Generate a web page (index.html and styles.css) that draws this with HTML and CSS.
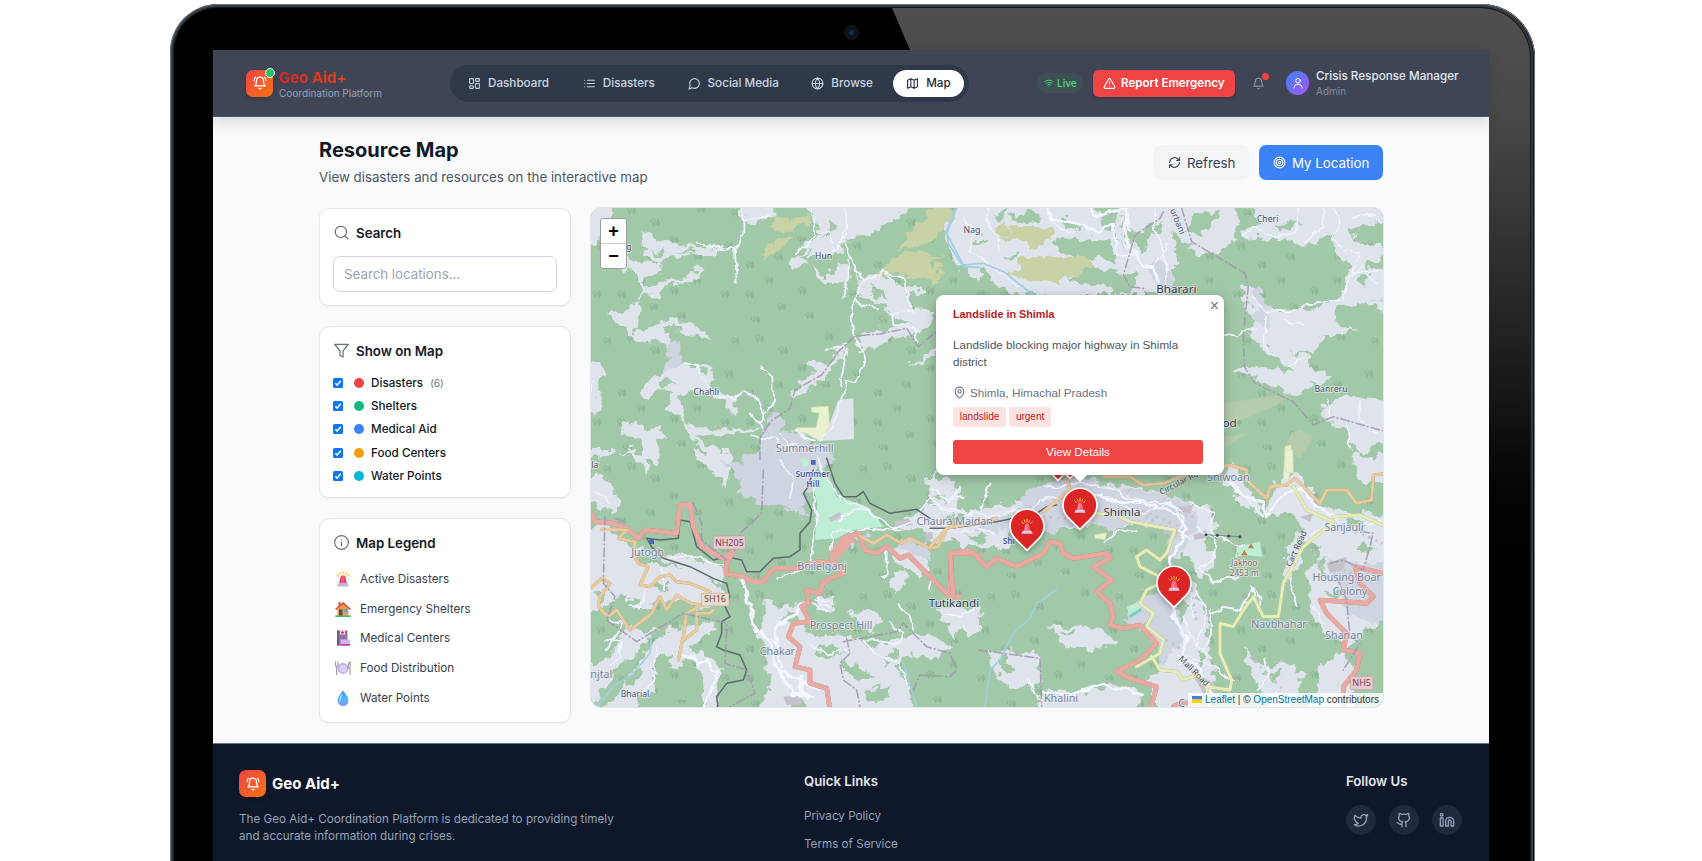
FILE: index.html
```html
<!DOCTYPE html>
<html lang="en">
<head>
<meta charset="utf-8">
<title>Geo Aid+ Resource Map</title>
<link rel="stylesheet" href="styles.css">
</head>
<body>
<svg class="defs" width="0" height="0" aria-hidden="true">
  <defs>
    <linearGradient id="siren" x1="0" x2="1"><stop offset="0" stop-color="#e8264f"/><stop offset=".5" stop-color="#ff6a7c"/><stop offset="1" stop-color="#e0244f"/></linearGradient>
    <linearGradient id="water" x1="0" y1="0" x2="0" y2="1"><stop offset="0" stop-color="#3a9be8"/><stop offset=".6" stop-color="#55b5fa"/><stop offset="1" stop-color="#8f8df5"/></linearGradient>
    <symbol id="i-siren" viewBox="0 0 16 16"><g stroke="#f9c23c" stroke-width="1.2" stroke-linecap="round"><path d="M8 .8V3M4.4 1.4l1 2M11.600 1.400l-1 2M2 3.600l1.600 1.400M14 3.600l-1.600 1.400"/></g><path d="M4.200 13 5.400 6q.4-1.800 2.600-1.800T10.600 6l1.200 7z" fill="url(#siren)"/><path d="M3.300 12h9.400l1.300 3.400H2z" fill="#c4b5e0"/></symbol>
    <symbol id="i-house" viewBox="0 0 16 16"><path d="M2.500 8 8 3l5.500 5v6.500h-11z" fill="#e0a05c"/><path d="M3.500 1h2v4h-2z" fill="#a56953"/><path d="M0 8 8 .8 16 8l-1.300 1L8 3.500 1.300 9z" fill="#e85535"/><path d="M4 8.500h3.500V15H4z" fill="#70443a"/><path d="M9.500 8h3v3h-3z" fill="#3ba9e8"/><path d="M.3 14.300h15.400V16H.3z" fill="#45b36b"/></symbol>
    <symbol id="i-hospital" viewBox="0 0 16 16"><path d="M2 .5h10.500v15H2z" fill="#8d779f"/><path d="M2 .5h2v15H2z" fill="#6e5a80"/><path d="M5 .5h5v4H5z" fill="#f5dff2"/><path d="m7.500 1 1.800 1.500-1.800 1.700-1.800-1.700z" fill="#e3227e"/><path d="M5.500 9.500H15v6H5.500z" fill="#d9b3f0"/><path d="M5.500 14H15v1.600H5.500z" fill="#c73bb8"/></symbol>
    <symbol id="i-plate" viewBox="0 0 16 16"><circle cx="8" cy="8.400" r="5.600" fill="#c5b4e8"/><circle cx="8" cy="8.400" r="3.600" fill="#dccff7"/><path d="M.5 1.500v4q0 1 1.200 1V15M3 1.500v4q0 1-1.300 1M15 15V2q-2 1.500-2 6h2" fill="none" stroke="#9d93aa" stroke-width="1.100"/></symbol>
    <symbol id="i-drop" viewBox="0 0 16 16"><path d="M8 0c1.300 3 5.500 6.400 5.500 10.500a5.500 5.500 0 0 1-11 0C2.500 6.400 6.700 3 8 0z" fill="url(#water)"/><path d="M7 5Q4.500 8 5 11" fill="none" stroke="#b8e4ff" stroke-width="1.200" stroke-linecap="round"/></symbol>
    <symbol id="i-bellring" viewBox="0 0 24 24"><path d="M10.300 21a1.940 1.940 0 0 0 3.400 0M4 2C2.800 3.700 2 5.700 2 8M22 8c0-2.300-.8-4.300-2-6M6 8a6 6 0 0 1 12 0c0 7 3 9 3 9H3s3-2 3-9"/></symbol>
    <symbol id="pin" viewBox="-60 -60 120 145"><path d="M0 73-36 37A51 51 0 1 1 36 37Z" fill="#dc2626" stroke="#fff" stroke-width="5"/>
      <g fill="none" stroke="#fbbf3f" stroke-width="3" stroke-linecap="round"><path d="M0-20v8M-8-18l2 7M8-18l-2 7M-15-12l4 5M15-12l-4 5"/></g>
      <path d="M-10 16-6-4Q-5-8 0-8T6-4l4 20z" fill="#ff6478"/><path d="M-5 12-3-4H1L0 12z" fill="#ff95a2"/><path d="M-13 14h26l4 9h-34z" fill="#d6cbea"/></symbol>
  </defs>
</svg>
<div class="laptop"><div class="bezel">
  <div class="gloss"></div>
  <div class="camera"></div>
  <div class="screen">
    <header class="topbar">
      <div class="brand">
        <div class="logo"><svg class="ico"><use href="#i-bellring"/></svg><span class="online"></span></div>
        <div class="brand-text"><span class="brand-name">Geo Aid+</span><span class="brand-sub">Coordination Platform</span></div>
      </div>
      <nav class="nav">
        <a class="n1"><svg class="ico" viewBox="0 0 24 24"><rect x="3" y="3" width="7" height="9" rx="1"/><rect x="14" y="3" width="7" height="5" rx="1"/><rect x="14" y="12" width="7" height="9" rx="1"/><rect x="3" y="16" width="7" height="5" rx="1"/></svg><span>Dashboard</span></a>
        <a class="n2"><svg class="ico" viewBox="0 0 24 24"><path d="M8 6h13M8 12h13M8 18h13M3 6h.01M3 12h.01M3 18h.01"/></svg><span>Disasters</span></a>
        <a class="n3"><svg class="ico" viewBox="0 0 24 24"><path d="M7.900 20A9 9 0 1 0 4 16.100L2 22Z"/></svg><span>Social Media</span></a>
        <a class="n4"><svg class="ico" viewBox="0 0 24 24"><circle cx="12" cy="12" r="10"/><path d="M12 2a14.500 14.500 0 0 0 0 20 14.500 14.500 0 0 0 0-20M2 12h20"/></svg><span>Browse</span></a>
        <a class="n5 active"><svg class="ico" viewBox="0 0 24 24"><path d="m3 6 6-3 6 3 6-3v15l-6 3-6-3-6 3zM9 3v15M15 6v15"/></svg><span>Map</span></a>
      </nav>
      <div class="tools">
        <span class="live"><svg class="ico" viewBox="0 0 24 24"><path d="M12 20h.01M2 8.820a15 15 0 0 1 20 0M5 12.860a10 10 0 0 1 14 0M8.500 16.430a5 5 0 0 1 7 0"/></svg>Live</span>
        <span class="report"><svg class="ico" viewBox="0 0 24 24"><path d="m21.730 18-8-14a2 2 0 0 0-3.480 0l-8 14A2 2 0 0 0 4 21h16a2 2 0 0 0 1.730-3M12 9v4M12 17h.01"/></svg><span>Report Emergency</span></span>
        <span class="bell"><svg class="ico" viewBox="0 0 24 24"><path d="M10.300 21a1.940 1.940 0 0 0 3.400 0M6 8a6 6 0 0 1 12 0c0 7 3 9 3 9H3s3-2 3-9"/></svg><i></i></span>
        <span class="avatar"><svg class="ico" viewBox="0 0 24 24"><circle cx="12" cy="7.500" r="4.500"/><path d="M4 22v-1a8 6.500 0 0 1 16 0v1"/></svg></span>
        <div class="user"><b>Crisis Response Manager</b><span>Admin</span></div>
      </div>
    </header>
    <main class="page">
      <div class="heading">
        <div><h1>Resource Map</h1><p>View disasters and resources on the interactive map</p></div>
        <div class="actions">
          <span class="btn refresh"><svg class="ico" viewBox="0 0 24 24"><path d="M3 12a9 9 0 0 1 9-9 9.750 9.750 0 0 1 6.740 2.740L21 8M21 3v5h-5M21 12a9 9 0 0 1-9 9 9.750 9.750 0 0 1-6.740-2.740L3 16M8 16H3v5"/></svg><span>Refresh</span></span>
          <span class="btn locate"><svg class="ico" viewBox="0 0 24 24"><circle cx="12" cy="12" r="10"/><circle cx="12" cy="12" r="6"/><circle cx="12" cy="12" r="2"/></svg><span>My Location</span></span>
        </div>
      </div>
      <div class="columns">
        <aside class="side">
          <section class="card search">
            <h2><svg class="ico" viewBox="0 0 24 24"><circle cx="11" cy="11" r="9"/><path d="m22 22-4.600-4.600"/></svg>Search</h2>
            <div class="field">Search locations...</div>
          </section>
          <section class="card filters">
            <h2><svg class="ico" viewBox="0 0 24 24"><path d="M23 2H1l8.500 10.500V20l5 2.500v-10z"/></svg>Show on Map</h2>
            <ul>
              <li><svg class="check" viewBox="0 0 10 10"><rect width="10" height="10" rx="1.500"/><path d="m2.300 5.200 1.800 1.900 3.700-4.400"/></svg><i class="dot red"></i>Disasters<small>(6)</small></li>
              <li><svg class="check" viewBox="0 0 10 10"><rect width="10" height="10" rx="1.500"/><path d="m2.300 5.200 1.800 1.900 3.700-4.400"/></svg><i class="dot green"></i>Shelters</li>
              <li><svg class="check" viewBox="0 0 10 10"><rect width="10" height="10" rx="1.500"/><path d="m2.300 5.200 1.800 1.900 3.700-4.400"/></svg><i class="dot blue"></i>Medical Aid</li>
              <li><svg class="check" viewBox="0 0 10 10"><rect width="10" height="10" rx="1.500"/><path d="m2.300 5.200 1.800 1.900 3.700-4.400"/></svg><i class="dot amber"></i>Food Centers</li>
              <li><svg class="check" viewBox="0 0 10 10"><rect width="10" height="10" rx="1.500"/><path d="m2.300 5.200 1.800 1.900 3.700-4.400"/></svg><i class="dot cyan"></i>Water Points</li>
            </ul>
          </section>
          <section class="card legend">
            <h2><svg class="ico" viewBox="0 0 24 24"><circle cx="12" cy="12" r="11"/><path d="M12 17v-5.500M12 7.500h.01"/></svg>Map Legend</h2>
            <ul>
              <li><svg><use href="#i-siren"/></svg>Active Disasters</li>
              <li><svg><use href="#i-house"/></svg>Emergency Shelters</li>
              <li><svg><use href="#i-hospital"/></svg>Medical Centers</li>
              <li><svg><use href="#i-plate"/></svg>Food Distribution</li>
              <li><svg><use href="#i-drop"/></svg>Water Points</li>
            </ul>
          </section>
        </aside>
        <div class="map">
          <svg class="tiles" viewBox="591 208 792 499" width="792" height="499">
            <defs>
              <filter id="ragged" x="-5%" y="-5%" width="110%" height="110%">
                <feTurbulence type="fractalNoise" baseFrequency=".028" numOctaves="3" seed="8" result="n"/>
                <feDisplacementMap in="SourceGraphic" in2="n" scale="52" xChannelSelector="R" yChannelSelector="G"/>
              </filter>
              <filter id="winding" x="-5%" y="-5%" width="110%" height="110%">
                <feTurbulence type="fractalNoise" baseFrequency=".03" numOctaves="2" seed="3" result="n"/>
                <feDisplacementMap in="SourceGraphic" in2="n" scale="24" xChannelSelector="R" yChannelSelector="G"/>
              </filter>
              <symbol id="tree" viewBox="0 0 26 28" overflow="visible"><path d="M7 25V10M7 18C1 18-1 12 2 8S11 2 12 8 12 18 7 18M19 25V11M19 5l-5 14h10z"/></symbol>
              <pattern id="woods" width="384" height="384" patternUnits="userSpaceOnUse">
                <rect width="384" height="384" fill="#a1c9a8"/>
                <g fill="none" stroke="#88b18f" stroke-width="2.300">
                  <use href="#tree" x="68" y="24" width="28" height="30"/><use href="#tree" x="142" y="18" width="28" height="30"/>
                  <use href="#tree" x="350" y="12" width="28" height="30"/><use href="#tree" x="50" y="122" width="28" height="30"/>
                  <use href="#tree" x="200" y="156" width="28" height="30"/><use href="#tree" x="270" y="104" width="28" height="30"/>
                  <use href="#tree" x="340" y="154" width="28" height="30"/><use href="#tree" x="112" y="180" width="28" height="30"/>
                  <use href="#tree" x="170" y="226" width="28" height="30"/><use href="#tree" x="38" y="266" width="28" height="30"/>
                  <use href="#tree" x="112" y="268" width="28" height="30"/><use href="#tree" x="270" y="258" width="28" height="30"/>
                  <use href="#tree" x="338" y="226" width="28" height="30"/><use href="#tree" x="208" y="306" width="28" height="30"/>
                  <use href="#tree" x="292" y="332" width="28" height="30"/><use href="#tree" x="130" y="344" width="28" height="30"/>
                  <use href="#tree" x="214" y="52" width="28" height="30"/>
                </g>
              </pattern>
            </defs>
            <rect class="woods" transform="translate(580 200) scale(.33333)" width="2450" height="1560"/>
            <!-- north-west -->
            <g transform="translate(580 200) scale(.33333)">
              <g class="ground">
              <path class="land" d="M0 0H90V110L50 125 0 130ZM140 160 165 190 240 185 245 230 200 225 195 262 250 245 300 235 345 205 365 215 350 240 290 250 240 265 235 292 195 285 180 330 155 402 80 350 140 330 182 310 185 265 170 230 125 200ZM178 120 210 95 240 120 300 135 440 142 400 165 330 165 230 185 180 165 200 145ZM185 383 250 365 290 345 310 375 350 380 400 418 320 405 280 395 270 430 185 425 150 400ZM192 545 240 520 310 490 400 500 405 530 375 560 460 590 470 640 450 655 440 600 400 590 330 570 290 615 325 682 540 685 480 700 350 705 445 780H400L262 620 280 590 250 565 215 585 192 575ZM0 490 65 485 70 520 50 560 62 635 0 640ZM115 700 150 665 210 680 240 675 252 710 232 780H190L200 720 160 710ZM485 0H580V60L560 62 500 70 490 50ZM680 0H985V25L900 85 850 110 800 115 770 170 690 170 640 210 625 185 670 150 720 100ZM695 195 730 225 790 190 812 225 792 250 740 248 705 225ZM830 210 860 240 920 225 960 260 1030 262 1035 275 980 280 1000 335 1060 325 1050 370 1010 400 900 430 830 445 850 400 920 385 990 372 930 345 890 300 840 290 850 250ZM640 572 725 500 800 430 808 450 750 500 720 540 660 590 635 602ZM680 490 705 475 740 495 752 512 705 515ZM980 505 1050 450 1068 440V460L1020 485ZM1130 0H1200V250L1140 205 1095 110Z"/>
              <path class="town" d="M265 425H300L310 480 290 505 235 522 270 490ZM575 640 600 645 612 682 650 700 740 730 760 800H430L540 760 545 700 570 680Z"/>
              <path class="farm" d="M575 55 690 40 695 70 640 95 580 97ZM540 150 620 115 640 125 550 168ZM1040 30 1120 25 1100 90 1060 112 980 150H955L985 95 1030 60ZM900 205 950 165 1085 163 1050 187 1052 208 1087 225 1080 245 1020 230 940 220 890 225Z"/>
              <path class="woods2" d="M215 150 250 140 255 158 220 162ZM300 155 340 150 330 162ZM250 385 300 375 310 395 260 400ZM240 545 270 535 280 550 245 560ZM360 510 390 515 375 535ZM720 120 760 60 770 90ZM860 260 900 270 930 310 890 290ZM900 355 950 350 960 365 910 370ZM655 165 690 150 680 185Z"/>
              </g>
              <path class="land" d="M775 600 820 595 822 718 730 722Z"/>
              <path class="pale" d="M695 622 745 618 748 680 720 725 680 700 648 695 650 683H708L718 640 695 635Z"/>
              <g class="track"><path d="M490 0V100L465 150 470 250M465 140 430 148 350 130M490 60 530 48 575 45M795 0 800 80 785 110 830 210 850 240 820 300 815 350 820 410 850 460 855 505 830 540 800 545 790 600 750 690 722 722M680 0 705 60V110L650 160M745 95 760 160 800 100M720 100 745 95M805 180 805 240 790 290M850 240 890 230 910 215 940 250M915 220 975 235 985 300 1000 335 935 340 940 375 1000 380 1015 430M825 300 860 320 895 325M795 430 740 450M800 445 780 560M540 500 580 530 582 600 550 650 540 665M310 485 350 495 370 540 400 575 460 600 490 575 530 590 555 660M40 545 30 580M640 690 700 720M600 700 640 760M510 712 580 715 600 740 650 730M515 640 545 680"/></g>
              <path class="stream" d="M1140 0 1100 90 1105 130 1150 200 1200 202"/>
              <path class="border" d="M540 780V715L570 665 630 625 645 570 725 525 775 455 825 408 900 402 980 385 1015 440 1068 395"/>
            </g>
            <!-- south-west -->
            <g transform="translate(580 450) scale(.33333)">
              <g class="ground">
              <path class="land" d="M0 90 60 70 90 100 115 150 110 185 0 150ZM0 0H110L90 20 0 30ZM100 0 210 5 190 75 170 20ZM330 0H450L440 120 380 50ZM0 235 80 225 120 270 160 290 260 320 290 310 430 355 430 395 350 375 300 345 250 330 200 310 160 320 190 345H300L380 380 440 430 430 470 350 470 320 450 240 460 180 470 130 440 80 470 0 500ZM0 640H60L80 600 130 550 140 520 190 545 240 535 150 620 90 680 45 770H0ZM240 560 300 530 420 520 370 560 330 600 390 615 420 660 400 800H370L380 700 350 640 310 610 300 660 265 655 280 610 230 620 220 690 240 740 180 730 160 800H60L200 600ZM555 450 600 470 680 460 665 520 680 545 810 560 900 590 1000 550 1080 560 1110 590 1060 640 1000 610 940 650 980 700 1000 800H700L640 730 630 800H540L575 690 560 620 540 590ZM930 370 975 360 985 395 950 435 930 410ZM810 490 900 485 920 515 860 540ZM920 290 980 280 1050 330 1020 390 970 340ZM1080 470 1200 480V530L1160 560 1150 500 1100 510ZM1040 90 1130 90 1140 180 1080 210 1200 230V250L1060 280 1030 230 930 230 1000 200 1060 160ZM720 440 770 450 750 480 710 470Z"/>
              <path class="town" d="M420 30 520 50 560 0H720L700 130 660 160 675 200 610 170 560 160 510 150 470 130 490 100ZM940 280 1040 270 1060 320 1020 330ZM800 260 850 250 860 270 810 290Z"/>
              <path class="woods2" d="M700 600 760 590 790 610 740 625ZM780 640 850 650 880 690 830 700ZM900 620 950 605 960 630 910 645ZM60 600 100 590 90 620 60 640ZM130 690 190 650 180 690 140 710ZM260 710 330 690 350 740 280 760ZM620 480 650 490 640 520 610 510ZM840 720 930 710 920 750 860 750ZM40 430 80 430 60 460ZM220 400 280 395 260 420 230 425ZM1060 140 1090 130 1080 160Z"/>
              </g>
              <path class="mint" d="M712 70 740 75 770 140 850 165 890 200 910 230 820 240 770 265 705 270 712 160 700 110Z"/>
              <path class="mint" d="M660 30 675 22 690 40 672 55Z"/>
              <path class="bld" d="M745 205 780 185 785 200 755 215ZM610 740 660 735 665 765 620 765ZM1035 250 1055 245 1060 265 1040 275ZM940 215 985 205 1000 225 950 230Z"/>
              <g class="track"><path d="M712 20 740 90 790 150 850 170 900 210 940 235 1030 210 1060 240 1110 245M705 60 700 160 712 220 700 270 690 350M755 300 760 250 820 240 860 235 960 245M770 210 840 175 870 190M1000 210 1050 140 1080 170 1150 190M920 290V370L905 382M710 450 750 475M715 440 760 465M700 460 740 480M590 380 640 370 700 345M850 570 900 620 960 640 980 700M850 570 960 580 970 555 930 520M955 465 990 500 1000 540M1090 490 1120 480 1150 500 1160 540M250 320 330 315 440 355M200 400 180 470 150 465M90 510 130 520 80 600M75 570 125 575 120 620 90 650M230 590 215 700 170 740M690 590 740 610 800 600M240 360 250 420M600 30 640 90 630 145M1050 420 1060 380 1020 350M1060 90 1070 60M1140 110 1100 160M50 120 90 160"/></g>
              <g class="road"><path d="M485 390 500 430 510 480 530 540 570 580 585 650 620 690 650 740 700 745M600 650 595 600 590 530 640 495 665 460M590 590 580 570M310 620 340 620 350 645 380 630 390 660 415 665 395 720 370 780M660 680 670 740M600 660 720 720"/><path class="plaza" d="M640 735 665 725 690 745M662 685 668 735"/></g>
              <g class="rail"><path d="M740 25 765 100 790 140 830 140 850 125 870 160 930 190 1010 178 1050 205M700 60 685 110 670 130 695 180 690 215 660 250 660 300 630 320 580 325 540 365 500 365 485 330 440 320 400 330 350 290 330 215 300 210 295 265 240 270 200 265 215 290 250 325 330 350 400 385 440 400 450 440 435 470 450 500 425 515 425 550 410 590 430 600 480 615 500 660 490 690 440 700 410 740 415 780"/></g>
              <g class="primary"><path d="M20 165 45 215 100 220 140 235 175 265 195 240 290 250 300 165 330 163 340 230 365 290 430 325 460 305 440 340 438 372 490 378 515 395 550 395 580 355 650 355 710 335 770 340 790 370 730 395 720 430 680 420 685 460 665 470 690 515 640 520 625 560 660 590 645 650 690 660 690 700 740 715 750 780M755 325 790 265 835 250 855 300 890 310 920 290 960 325 985 315 1030 360 1090 420 1110 440 1140 440M1110 440 1115 310 1160 300 1200 320M690 515 700 525M770 310 800 270 820 270"/></g>
              <g class="wide"><path d="M766 312 798 275"/></g>
              <g class="secondary"><path d="M65 238 140 240 115 265 165 275 160 310 175 340 205 350 180 405 210 410 240 380 270 375 290 395 330 400 390 425M20 425 65 385 90 400 60 440 55 470 85 500 110 480 150 540 190 510 215 490 240 440 260 480 290 435 330 460 365 465 320 490 310 560 295 630M400 480 390 490 350 490 350 540 305 575M840 258 880 280 920 255 965 280 990 265 1050 295 1075 290 1100 240"/></g>
              <path class="stream" d="M215 550 210 610 160 670 100 710 50 770M970 640 990 700 1010 770"/>
              <path class="border" d="M550 60 545 190 480 250 460 310M340 160 365 220 365 270 440 330M75 200 70 400 105 440 80 510 170 575 310 490 440 520 435 640 500 660 525 730 450 770M105 205 135 215M800 565 810 610 780 640 790 690 830 720 840 770M790 575 950 545 970 520 1040 590 1110 610 1130 660 1110 680 1020 675 1000 720"/>
            </g>
            <!-- north-east -->
            <g transform="translate(930 200) scale(.33333)">
              <g class="ground">
              <path class="land" d="M95 0H480L520 70 560 110 600 160 640 190 680 230 700 285H250L150 200 80 130 60 90ZM560 0H900L930 60 910 120 860 160 800 160 760 120 720 90 740 170 720 280H640L620 200 560 100ZM960 0H1390V65L1250 80 1290 130 1357 140V170L1300 200 1390 210V340L1230 320 1220 370 1290 390 1200 400 1150 450 1090 460 1010 440 960 400 975 350 950 300 930 290 940 255 970 270 1020 330 1130 330 1220 290 1270 200 1220 160 1210 100 1130 140 1060 110 960 115 930 100 990 70ZM950 400 1000 410 1080 460 1150 470 1130 500 1060 490ZM915 515 950 500 1060 510 1120 530 1145 545 1110 580 1080 585 1030 560 960 530ZM1060 480 1200 520 1170 550 1080 520ZM1170 620 1240 580 1280 590 1390 600V720L1290 760 1250 700 1180 660ZM1250 760 1390 770V840H1280Z"/>
              <path class="woods2" d="M130 115 170 120 170 132 135 130ZM230 50 290 35 340 50 320 70 260 65ZM400 60 460 80 440 100 400 90ZM210 160 280 155 250 180ZM1215 330 1250 310 1320 310 1357 330V375L1300 380 1220 365ZM1040 80 1110 60 1100 85 1050 95ZM380 110 540 120 560 190 470 170 380 150ZM480 190 620 230 600 285 420 240ZM180 45 230 30 200 70ZM570 50 620 110 700 60 670 110 640 150 590 130ZM720 240 745 170 760 285ZM790 40 880 30 820 100 770 90ZM1290 90 1357 80V110L1300 120ZM1280 230 1330 220 1300 260Z"/>
              <path class="farm" d="M0 190 38 195 20 225 35 245 0 245ZM255 80 350 85 370 110 330 150 270 120 210 115ZM270 175 470 165 480 200 380 250 360 235 260 240 240 235ZM190 85 230 65 240 90 210 110Z"/>
              <path class="town" d="M655 190 680 175 720 200 730 250 700 275 670 240ZM960 270 985 265 1020 330 1010 390 975 370 980 310ZM1330 300 1390 280V320Z"/>
              </g>
              <path class="field-p" d="M880 610 1085 580 1040 615 960 650 900 670 880 650ZM880 710 950 700 880 750ZM1085 700 1110 688 1150 710 1110 775 1060 750Z"/>
              <path class="pale" d="M1065 740 1082 735 1090 780 1075 840H1060Z"/>
              <g class="track"><path d="M105 60 130 100 120 150 200 210 270 260M175 0 170 70 210 120 205 150M350 0 360 60 390 90 430 100M680 0 670 70 690 130 710 210 715 250M700 285 670 200 720 130M880 400 920 408 950 390 980 390M970 290 1000 330 1080 335 1130 310 1240 300 1260 230 1300 200M935 105 970 80 1040 110 1100 95 1110 0M1120 130 1180 80 1180 0M1200 0 1230 60 1210 110 1240 150 1290 160 1260 220 1350 210M1010 340 1000 440 1030 470M1310 225 1340 250M1060 360 1120 375M1340 40 1260 50M1190 600 1200 650M1290 600 1290 660 1340 700M1250 660 1260 740M1120 470 1080 500"/></g>
              <g class="road"><path d="M350 0 365 60 420 65 510 95 550 75 560 165 620 165 635 195 670 200 680 245M475 0 495 45 530 35 590 30 585 120 620 160M590 30 600 90"/></g>
              <path class="stream" d="M90 0 50 100 100 195 160 190 220 215 310 285"/>
              <path class="border" d="M700 35 690 55 615 105 580 225 600 260 640 265 650 285M755 25 785 125 945 220 955 260 940 400 943 500 975 550 1090 605 1150 675 1210 650 1357 692"/>
            </g>
            <!-- south-east -->
            <g transform="translate(930 450) scale(.33333)">
              <g class="ground">
              <path class="land" d="M120 190 200 160 300 150 400 100 480 90 620 120 760 150 840 170 860 230 830 290 860 330 820 380 780 330 740 320 720 240 600 230 540 240 500 220 400 240 330 230 200 300 100 290 60 250ZM35 470 130 480 160 500 100 520 80 570 30 510ZM170 600 320 610 340 690 250 720 180 640ZM350 530 500 530 560 570 520 600 400 590ZM320 760 350 715 440 735 530 705 600 700 640 740 580 800H330ZM900 30 1000 190 1040 100 1110 70 1170 170 1220 180 1390 200V480L1290 560 1250 600 1180 540 1140 470 1130 380 1170 280 1100 260 1120 330 1080 400 1060 380 1080 270 1130 230 1060 190 1000 200 930 150 880 100ZM940 600 1000 650 1080 640 1120 690 1060 800H1040L970 690ZM1180 640 1240 600 1290 700 1250 800H1130ZM780 380 830 500 850 640 860 700 780 800H690L650 700 690 640 730 580 760 500Z"/>
              <path class="town" d="M270 130 400 80 480 90 530 110 700 140 780 160 800 230 760 300 730 330 710 300 730 240 600 225 540 240 480 210 350 250 270 220 200 250 130 240 200 200 300 180ZM590 500 660 440 720 420 720 500 680 530 660 500 620 540ZM680 580 750 540 760 570 700 620ZM600 470 640 430 670 450 640 480ZM1200 340 1390 330V520L1250 500ZM660 440 730 420 760 570 700 640 640 520Z"/>
              <path class="woods2" d="M1250 215 1290 210 1300 240 1260 240ZM1150 330 1190 320 1180 380ZM1290 280 1340 290 1330 310 1290 305ZM1180 420 1230 430 1220 450ZM790 600 830 620 810 650ZM200 620 240 630 240 670 210 650ZM390 545 430 540 420 565ZM230 255 300 230 320 260 250 290ZM100 250 160 260 140 280ZM1000 670 1050 665 1040 700Z"/>
              </g>
              <path class="bld" d="M740 170 790 165 780 190 745 185ZM790 255 830 240 825 265 795 270ZM1110 200 1150 190 1140 215ZM700 230 750 240 740 260 700 250ZM540 180 600 175 590 195 545 195ZM1190 340 1250 320 1240 360 1200 370ZM780 660 850 700 860 740 820 730Z"/>
              <path class="speckle" d="M600 150 790 200M620 175 760 235M650 200 740 260M1200 350 1357 400M1180 200 1357 280M1120 260 1180 360M780 400 800 520M690 560 760 600M960 620 1060 720M400 150 560 200M340 200 500 215"/>
              <path class="mint" d="M920 290 990 275 998 320 940 315 915 325ZM590 470 625 460 635 480 600 500Z"/>
              <path class="pool" d="M598 495 632 474 636 482 602 503Z"/>
              <path class="pale" d="M495 255 530 248 525 268 495 265ZM1065 0 1088 0 1090 70 1065 65Z"/>
              <g class="track"><path d="M0 165 120 190 180 200 260 180M350 110 450 100 540 115 620 150 700 160 760 180M480 130 640 190 720 160 760 200 750 240 780 270M780 160 850 190 840 240 880 270 940 290M800 230 860 270 850 330 810 355 850 400 920 380M880 80 940 130 1000 200M790 420 830 470 800 590M840 480 850 540 820 600M740 610 830 640 910 690M760 500 780 560 830 620M1100 470 1080 400M1150 470 1180 520M960 410 980 440 920 480M1000 620 1020 680 980 720M1200 200 1250 240 1357 210M0 120 60 150 100 140M130 230 200 250M60 240 130 240M180 100 150 180M300 180 330 150 400 140M50 490 90 500 130 480M290 680 320 740M1140 260 1200 220M780 420 790 500M840 490 880 470 930 480 970 410 990 440 985 480M520 280 570 240 620 250"/></g>
              <g class="road"><path d="M470 130 560 150 650 160 740 190 770 240 750 290 720 320 715 360M732 470 730 500 770 560 760 600 750 640M900 100 930 130 1000 160 1010 200 1050 140 1110 110 1160 170 1210 200M340 725 430 735 520 705 580 720 640 735M750 620 810 660 850 740"/></g>
              <g class="rail"><path d="M0 235 60 235 200 215 320 190 350 170 380 165"/></g>
              <g class="yellow"><path d="M490 190 560 195 600 215 735 240 710 310 690 330 650 300 620 320 630 350 690 380M690 400 650 420 630 460 670 490 650 530 700 570 690 610 620 650M665 620 690 660 740 665 760 690 800 675 830 710 900 720 905 690 870 610 870 520 910 530 940 480 970 440 1000 500 1045 500 1060 400 1120 290 1210 215 1130 180 1090 110M1210 200 1290 195 1380 235M830 710 840 780"/></g>
              <g class="secondary"><path d="M0 290 30 260 50 235 100 225 200 205M340 185 420 120 410 80 380 60M520 80 600 80 640 105 700 100 800 60 900 45 950 60 950 90 1010 145 1020 110 1070 105 1095 85 1130 120 1170 160 1190 120 1250 120 1280 160 1325 150 1330 75 1380 70"/></g>
              <g class="primary"><path d="M60 440 70 440 60 310 130 310 170 350 200 325 260 350 340 310 360 275 390 280 400 310 430 325 530 310 540 325 490 350 545 390 500 425 540 460 550 500 540 525 580 535 630 525 680 580 630 630 560 665 600 685 680 710 660 780M730 770 760 755 800 770M1380 375 1275 350 1290 400 1330 440 1310 460 1240 455 1170 450 1190 490 1250 550 1240 600 1290 610 1280 660 1240 710 1240 780"/></g>
              <path class="stream" d="M380 418 320 460 300 505 250 550 210 630 180 660 165 770"/>
              <path class="border" d="M145 600 330 625 335 770M1200 340 1240 330 1300 360 1330 250 1270 240M1220 380 1250 450 1260 560 1290 580 1240 660"/>
              <path class="trail" d="M880 230 910 280 930 330M770 90 700 150M620 100 590 130"/>
              <path class="lift" d="M828 254 930 260"/><g fill="#3f444c"><circle cx="828" cy="254" r="4.500"/><circle cx="862" cy="256" r="4.500"/><circle cx="896" cy="258" r="4.500"/><circle cx="930" cy="260" r="4.500"/></g>
              <path fill="#c77d4f" d="m963 280 9 15h-18zM943 300l9 15h-18z"/>
            </g>
            <!-- place names -->
            <g transform="translate(930 200) scale(.33333)">
              <g class="lbl small"><text x="126" y="98" text-anchor="middle">Nag</text><text x="1013" y="66" text-anchor="middle">Cheri</text><text x="1203" y="575" text-anchor="middle">Banreru</text><text x="-319" y="177" text-anchor="middle">Hun</text><text x="-671" y="585" text-anchor="middle">Chahli</text><text transform="translate(720 30) rotate(68)">urbani</text><text x="-911" y="151">g</text></g>
              <g class="lbl strong"><text x="739" y="280" text-anchor="middle">Bharari</text><text x="920" y="680" text-anchor="end">od</text></g>
            </g>
            <g transform="translate(580 450) scale(.33333)">
              <path class="station" d="M208 268h14v14h-14zM693 30h14v14h-14z"/>
              <g class="lbl mid"><text x="203" y="317" text-anchor="middle">Jutogh</text><text x="726" y="361" text-anchor="middle">Boilelganj</text><text x="783" y="538" text-anchor="middle">Prospect Hill</text><text x="592" y="616" text-anchor="middle">Chakar</text><text x="1124" y="226" text-anchor="middle">Chaura Maidan</text><text x="31" y="685">njtal</text><text x="674" y="7" text-anchor="middle">Summerhill</text></g>
              <g class="lbl strong"><text x="1122" y="471" text-anchor="middle">Tutikandi</text></g>
              <g class="lbl small"><text x="165" y="742" text-anchor="middle">Bharial</text><text x="34" y="54">la</text></g>
              <g class="lbl rail-name"><text x="698" y="80" text-anchor="middle">Summer</text><text x="699" y="110" text-anchor="middle">Hill</text></g>
              <rect class="shield" x="400" y="258" width="96" height="40" rx="4"/><text class="shield-t" x="448" y="287" text-anchor="middle">NH205</text>
              <rect class="shield tan" x="364" y="430" width="83" height="38" rx="4"/><text class="shield-t" x="405" y="457" text-anchor="middle">SH16</text>
            </g>
            <g transform="translate(930 450) scale(.33333)">
              <g class="lbl mid"><text x="895" y="92" text-anchor="middle">Shiwoan</text><text x="1242" y="243" text-anchor="middle">Sanjauli</text><text x="1250" y="393" text-anchor="middle">Housing Boar</text><text x="1260" y="434" text-anchor="middle">Colony</text><text x="1047" y="533" text-anchor="middle">Navbhahar</text><text x="1242" y="566" text-anchor="middle">Shanan</text><text x="393" y="756" text-anchor="middle">Khalini</text><text x="745" y="770">C</text></g>
              <g class="lbl strong"><text x="576" y="197" text-anchor="middle">Shimla</text></g>
              <g class="lbl peak"><text x="943" y="348" text-anchor="middle">Jakhoo</text><text x="943" y="377" text-anchor="middle">2453 m</text></g>
              <g class="lbl rail-name"><text x="218" y="282">Shi</text></g>
              <g class="lbl street"><text transform="translate(694 135) rotate(-27)">Circular Roa</text><text transform="translate(1082 352) rotate(-65)">Cart Road</text><text transform="translate(745 628) rotate(45)">Mall Road</text></g>
              <rect class="shield" x="1261" y="679" width="68" height="40" rx="4"/><text class="shield-t" x="1295" y="707" text-anchor="middle">NH5</text>
            </g>
          </svg>
          <svg class="pin p4"><use href="#pin"/></svg>
          <svg class="pin p5"><use href="#pin"/></svg>
          <svg class="pin p1"><use href="#pin"/></svg>
          <svg class="pin p2"><use href="#pin"/></svg>
          <svg class="pin p3"><use href="#pin"/></svg>
          <div class="zoom"><span>+</span><span>−</span></div>
          <div class="popup">
            <span class="close">×</span>
            <h3>Landslide in Shimla</h3>
            <p>Landslide blocking major highway in Shimla district</p>
            <div class="place"><svg class="ico" viewBox="0 0 24 24"><path d="M20 10c0 5-5.500 10.200-7.400 11.800a1 1 0 0 1-1.200 0C9.500 20.200 4 15 4 10a8 8 0 0 1 16 0"/><circle cx="12" cy="10" r="3"/></svg>Shimla, Himachal Pradesh</div>
            <div class="tags"><span>landslide</span><span>urgent</span></div>
            <div class="details">View Details</div>
          </div>
          <div class="attribution"><svg width="10" height="7" viewBox="0 0 10 7"><path fill="#4c7be1" d="M0 0h10v3.500H0z"/><path fill="#ffd500" d="M0 3.500h10V7H0z"/></svg> <a>Leaflet</a> | © <a>OpenStreetMap</a> contributors</div>
        </div>
      </div>
    </main>
    <footer class="footer">
      <div class="about">
        <div class="f-brand"><div class="logo"><svg class="ico"><use href="#i-bellring"/></svg></div><b>Geo Aid+</b></div>
        <p>The Geo Aid+ Coordination Platform is dedicated to providing timely<br>and accurate information during crises.</p>
      </div>
      <div class="links"><h4>Quick Links</h4><a>Privacy Policy</a><a>Terms of Service</a></div>
      <div class="follow"><h4>Follow Us</h4>
        <div class="social">
          <span><svg class="ico" viewBox="0 0 24 24"><path d="M22 4s-.7 2.100-2 3.400c1.600 10-9.400 17.300-18 11.600 2.200.1 4.400-.6 6-2C3 15.500.5 9.600 3 5c2.200 2.600 5.600 4.100 9 4-.9-4.200 4-6.600 7-3.800 1.100 0 3-1.200 3-1.200z"/></svg></span>
          <span><svg class="ico" viewBox="0 0 24 24"><path d="M15 22v-4a4.800 4.800 0 0 0-1-3.500c3 0 6-2 6-5.500.08-1.250-.27-2.480-1-3.500.28-1.150.28-2.350 0-3.500 0 0-1 0-3 1.500-2.640-.5-5.360-.5-8 0C6 2 5 2 5 2c-.3 1.150-.3 2.350 0 3.500A5.400 5.400 0 0 0 4 9c0 3.500 3 5.500 6 5.500-.39.490-.68 1.050-.85 1.650-.17.600-.22 1.230-.15 1.850v4M9 18c-4.510 2-5-2-7-2"/></svg></span>
          <span><svg class="ico" viewBox="0 0 24 24"><path d="M16 8a6 6 0 0 1 6 6v7h-4v-7a2 2 0 0 0-4 0v7h-4v-7a6 6 0 0 1 6-6z"/><rect x="2" y="9" width="4" height="12"/><circle cx="4" cy="4" r="2"/></svg></span>
        </div>
      </div>
    </footer>
  </div>
</div></div>
</body>
</html>
```
FILE: styles.css
```css
* { box-sizing: border-box; }
body { margin: 0; height: 861px; overflow: hidden; background: #fff; font-family: Inter, "Liberation Sans", sans-serif; color: #111827; }
h1, h2, h3, h4, p, ul { margin: 0; padding: 0; }
ul { list-style: none; }
.defs { position: absolute; }
.ico { fill: none; stroke: currentColor; stroke-width: 2; stroke-linecap: round; stroke-linejoin: round; flex: none; display: block; }

.laptop { width: 1365px; height: 900px; margin: 4px 0 0 170px; padding: 4px 5px 0 4px; border-radius: 48px 54px 0 0; background: #333a40; box-shadow: inset 0 0 0 1px #6d757b, inset -2px 0 0 #101416; overflow: hidden; }
.bezel { position: relative; height: 900px; padding: 42px 41px 0 39px; background: #000; border-radius: 44px 50px 0 0; overflow: hidden; box-shadow: 0 0 0 1px #15191c; }
.gloss { position: absolute; top: 0; right: 0; width: 638px; height: 560px; background: linear-gradient(#4f4f50, #474748 20%, #252526 55%, #050506 85%, #000); clip-path: polygon(0 0, 100% 0, 100% 100%, 240px 100%); }
.camera { position: absolute; left: 670px; top: 17px; width: 15px; height: 15px; border-radius: 50%; background: radial-gradient(#13304f 0 10%, #0b1119 35%, #121417 65%, #191b1e); }
.screen { position: relative; display: flex; flex-direction: column; height: 850px; background: #f9fafb; }

.topbar { position: relative; z-index: 1; flex: none; display: flex; align-items: center; height: 67px; padding: 0 30px 0 33px; background: #404555; border-bottom: 1px solid #4b566a; box-shadow: 0 7px 12px rgba(30, 35, 50, .13); }
.brand { display: flex; gap: 6px; width: 204px; align-items: center; }
.logo { position: relative; display: grid; place-items: center; width: 27px; height: 27px; border-radius: 7px; background: linear-gradient(135deg, #ef4444, #f97316); color: #fff; box-shadow: 0 2px 4px rgba(0, 0, 0, .2); }
.logo .ico { width: 14px; height: 14px; }
.online { position: absolute; top: -2px; right: -2px; width: 10px; height: 10px; border-radius: 50%; background: #22c55e; border: 1px solid #fff; }
.brand-text { display: flex; flex-direction: column; padding-top: 2px; white-space: nowrap; }
.brand-name { font-size: 15px; line-height: 17px; font-weight: 700; width: max-content; background: linear-gradient(90deg, #dc2626, #e2441c); background-clip: text; -webkit-background-clip: text; color: transparent; }
.brand-sub { font-size: 10px; line-height: 14px; color: #94a3b8; }
.nav { display: flex; align-items: center; gap: 6px; width: 519px; height: 37px; padding: 0 5px; border-radius: 19px; background: #2f394a; }
.nav a { display: flex; align-items: center; gap: 7px; height: 27px; padding: 0 13px; border-radius: 14px; font-size: 11.700px; font-weight: 500; color: #cbd5e1; white-space: nowrap; }
.nav .ico { width: 13px; height: 13px; }
.n1 { width: 109px; } .n2 { width: 99px; } .n3 { width: 118px; } .n4 { width: 89px; } .n5 { width: 71px; }
.nav .active { background: #fff; color: #1e293b; }
.tools { display: flex; align-items: center; margin-left: auto; white-space: nowrap; }
.live { display: flex; align-items: center; gap: 3px; width: 46px; height: 20px; padding-left: 7px; border-radius: 10px; background: #3d5055; color: #4ade80; font-size: 10px; font-weight: 500; }
.live .ico { width: 10px; height: 10px; }
.report { display: flex; align-items: center; gap: 5px; width: 142px; height: 27px; margin-left: 10px; padding-left: 10px; border-radius: 6px; background: #ef4444; color: #fff; font-size: 11.600px; font-weight: 600; box-shadow: 0 1px 3px rgba(0, 0, 0, .25); }
.report .ico { width: 13px; height: 13px; }
.bell { position: relative; margin-left: 17px; color: #94a3b8; }
.bell .ico { width: 13px; height: 13px; stroke-width: 1.8; }
.bell i { position: absolute; top: -4px; right: -4px; width: 7px; height: 7px; border-radius: 50%; background: #ef4444; }
.avatar { display: grid; place-items: center; width: 23px; height: 24px; margin-left: 21px; border-radius: 50%; background: linear-gradient(135deg, #3b82f6, #a855f7); color: #fff; }
.avatar .ico { width: 12px; height: 12px; }
.user { display: flex; flex-direction: column; width: 143px; margin-left: 7px; }
.user b { font-size: 11.700px; line-height: 15px; font-weight: 500; color: #e2e8f0; }
.user span { font-size: 10px; line-height: 14px; color: #8190a8; }

.page { flex: none; height: 626px; padding: 21px 106px 0; }
.heading { display: flex; justify-content: space-between; height: 70px; }
h1 { font-size: 20px; line-height: 24px; font-weight: 700; color: #111827; }
.heading p { margin-top: 6px; font-size: 13.300px; line-height: 18px; color: #4b5563; }
.actions { display: flex; gap: 10px; padding-top: 7px; }
.btn { display: flex; align-items: center; height: 35px; padding-left: 14px; gap: 6px; border-radius: 7px; font-size: 13.300px; }
.btn .ico { width: 13px; height: 13px; }
.refresh { width: 95px; background: #f3f4f6; color: #374151; }
.locate { width: 124px; background: #3b82f6; color: #fff; }

.columns { display: flex; gap: 20px; }
.side { display: flex; flex-direction: column; gap: 20px; width: 252px; }
.card { border: 1px solid #e5e7eb; border-radius: 10px; background: #fff; padding: 12px 13px; box-shadow: 0 1px 2px rgba(0, 0, 0, .05); }
.card h2 { display: flex; align-items: center; gap: 7px; height: 23px; font-size: 13.300px; font-weight: 600; }
.card h2 .ico { width: 15px; height: 15px; margin-left: 1px; color: #6b7280; }
.search { height: 98px; }
.field { height: 36px; margin-top: 12px; padding: 0 10px; border: 1px solid #d1d5db; border-radius: 7px; font-size: 13.300px; line-height: 34px; color: #9ca3af; }
.filters { height: 172px; }
.filters ul { margin-top: 9px; }
.filters li { display: flex; align-items: center; height: 23.300px; font-size: 11.700px; font-weight: 500; }
.check { width: 10px; height: 10px; margin-right: 10px; fill: #0b76f6; }
.check path { fill: none; stroke: #fff; stroke-width: 1.500; }
.dot { width: 10px; height: 10px; margin: 0 7px 0 1px; border-radius: 50%; }
.red { background: #ef4444; } .green { background: #10b981; } .blue { background: #3b82f6; } .amber { background: #f59e0b; } .cyan { background: #06b6d4; }
.filters small { margin-left: 7px; font-size: 10px; font-weight: 400; color: #6b7280; }
.legend { height: 205px; }
.legend ul { margin-top: 10px; }
.legend li { display: flex; align-items: center; height: 29.800px; font-size: 11.700px; color: #374151; }
.legend li svg { width: 16px; height: 16px; margin: 0 9px 0 2px; }

.map { position: relative; width: 792px; height: 499px; border-radius: 10px; overflow: hidden; box-shadow: 0 0 0 1px #e5e7eb; }
.tiles { display: block; }
.woods { fill: url(#woods); }
.ground { filter: url(#ragged); }
.woods2 { fill: #a1c9a8; }
.land { fill: #dfe3eb; }
.town { fill: #cfd4e1; }
.farm { fill: #c8d2a5; }
.field-p { fill: #b4cbac; }
.pale { fill: #eaf1d3; stroke: #d3e3a5; stroke-width: 2; }
.mint { fill: #bbeed2; }
.pool { fill: #79cfc0; }
.bld { fill: #c6c2cb; }
.speckle { fill: none; stroke: #c5c3ce; stroke-width: 9; stroke-dasharray: 5 13 8 17; }
.track path, .road path, .primary path, .secondary path, .yellow path, .rail path, .wide path, .stream, .border, .trail, .lift { fill: none; stroke-linejoin: round; stroke-linecap: round; }
.track path { stroke: #f2f5fe; stroke-width: 5; }
.track { filter: url(#winding) drop-shadow(0 0 1px #8f99c4); }
.road path { stroke: #f3f5ff; stroke-width: 9; }
.road .plaza { stroke-width: 20; }
.road { filter: url(#winding) drop-shadow(0 0 1px #8f99c4); }
.primary path { stroke: #e7aaa3; stroke-width: 14; }
.primary { filter: drop-shadow(0 0 1px #cc6f68); }
.wide path { stroke: #e7aaa3; stroke-width: 32; }
.secondary path { stroke: #e8cba2; stroke-width: 9; }
.secondary { filter: drop-shadow(0 0 1px #b78639); }
.yellow path { stroke: #e5ebb9; stroke-width: 10; }
.yellow { filter: drop-shadow(0 0 1px #909c4d); }
.rail path { stroke: #5f6873; stroke-width: 4.500; }
.stream { stroke: #a0cfe2; stroke-width: 5; }
.border { stroke: #a193b0; stroke-width: 4.500; stroke-dasharray: 26 9 3 9; opacity: .85; }
.trail { stroke: #dfa59b; stroke-width: 3; stroke-dasharray: 4 6; }
.lift { stroke: #61656c; stroke-width: 2; }
.station { fill: #4966ba; }
.lbl { font-family: "Noto Sans", sans-serif; paint-order: stroke; stroke: #e9edf3; stroke-opacity: .8; stroke-width: 5px; stroke-linejoin: round; }
.mid { font-size: 32px; fill: #76809a; }
.strong { font-size: 35px; fill: #343a4e; }
.small { font-size: 26px; fill: #4d526b; }
.rail-name { font-size: 25px; font-weight: 600; fill: #4b5bb3; }
.peak { font-size: 25px; fill: #8b6a59; }
.street { font-size: 25px; fill: #50505d; stroke-opacity: .4; }
.shield { fill: #e7cbd1; stroke: #c1989f; stroke-width: 2; }
.tan { fill: #eadccd; stroke: #bcaa91; }
.shield-t { font: 27px "Noto Sans", sans-serif; fill: #77444c; }

.pin { position: absolute; width: 40px; height: 48.300px; filter: drop-shadow(0 2px 3px rgba(0, 0, 0, .3)); }
.p1 { left: 469px; top: 277px; }
.p2 { left: 416px; top: 298px; }
.p3 { left: 563px; top: 355px; }
.p4 { left: 447px; top: 228px; }
.p5 { left: 459px; top: 226px; }
.zoom { position: absolute; left: 9px; top: 10px; width: 27px; height: 51px; border: 1px solid #989e9a; border-radius: 3px; background: #fff; font: bold 18px/24px "Liberation Sans", Arial, sans-serif; color: #000; text-align: center; }
.zoom span { display: block; height: 24px; }
.zoom span + span { border-top: 1px solid #ccc; }
.popup { position: absolute; left: 345px; top: 87px; width: 288px; height: 180px; padding: 12px 21px 0 17px; border-radius: 8px; background: #fff; font-family: "Liberation Sans", Arial, sans-serif; filter: drop-shadow(0 3px 6px rgba(0, 0, 0, .28)); }
.popup::after { content: ""; position: absolute; left: 137px; top: 180px; border: 7px solid transparent; border-top-color: #fff; border-bottom: 0; }
.close { position: absolute; right: 5px; top: 2px; font-size: 16px; line-height: 18px; color: #757575; }
.popup h3 { font-size: 10.800px; line-height: 14px; color: #b91c1c; }
.popup p { margin-top: 15px; font-size: 11.650px; line-height: 17px; color: #4b5563; }
.place { display: flex; align-items: center; gap: 4px; height: 16px; margin-top: 14px; font-size: 11.650px; color: #6b7280; }
.place .ico { width: 13px; height: 13px; }
.tags { display: flex; gap: 3px; margin-top: 7px; }
.tags span { height: 20px; padding: 0 6.800px; border-radius: 3px; background: #fee2e2; font-size: 10px; line-height: 20px; color: #b91c1c; }
.details { height: 24px; margin-top: 13px; border-radius: 3px; background: #ef4444; color: #fff; font-size: 11.650px; line-height: 23px; text-align: center; }
.attribution { position: absolute; right: 0; bottom: 0; height: 14px; padding: 0 4px; background: rgba(255, 255, 255, .82); font: 10px/14px "Liberation Sans", Arial, sans-serif; color: #333; white-space: nowrap; }
.attribution a { color: #0078a8; }

.footer { flex: none; display: flex; height: 157px; padding: 26px 0 0 26px; border-top: 1px solid #6b7280; background: #0f172a; color: #fff; }
.about { width: 565px; }
.f-brand { display: flex; align-items: center; gap: 6px; }
.f-brand b { font-size: 15px; }
.about p { margin-top: 14px; font-size: 11.670px; line-height: 16.500px; color: #94a3b8; white-space: nowrap; }
.links { width: 542px; display: flex; flex-direction: column; padding-top: 1px; }
.follow { padding-top: 1px; }
.footer h4 { font-size: 13.200px; line-height: 20px; font-weight: 600; color: #e5e7eb; }
.links a { margin-top: 15px; font-size: 11.670px; line-height: 20px; color: #94a3b8; }
.links a + a { margin-top: 8px; }
.social { display: flex; gap: 13px; margin-top: 14px; }
.social span { display: grid; place-items: center; width: 30px; height: 30px; border-radius: 50%; background: #1e293b; color: #94a3b8; }
.social .ico { width: 16px; height: 16px; }
```
